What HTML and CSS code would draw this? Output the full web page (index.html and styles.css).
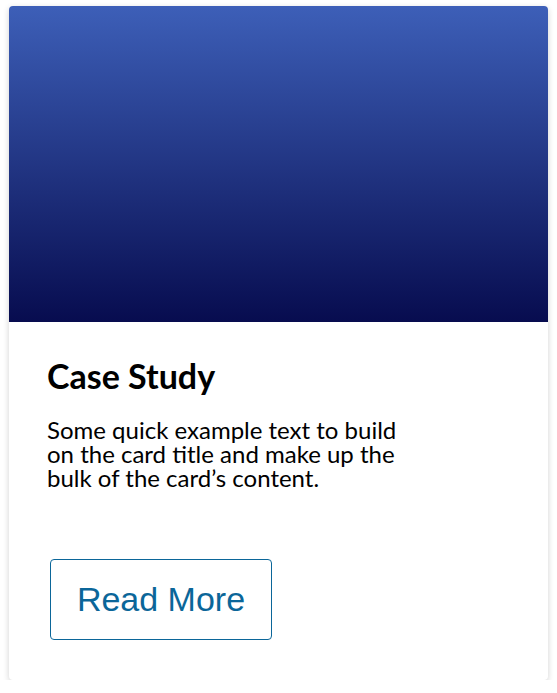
FILE: index.html
```html
<!DOCTYPE html>
<html>
<head>
<meta charset="utf-8">
<link rel="stylesheet" href="styles.css">
</head>
<body>
<div class="card">
  <div class="card-img"></div>
  <div class="card-body">
    <h2 class="card-title">Case Study</h2>
    <p class="card-text">Some quick example text to build on the card title and make up the bulk of the card’s content.</p>
    <a class="btn" href="#">Read More</a>
  </div>
</div>
</body>
</html>
```
FILE: styles.css
```css
html, body { margin: 0; padding: 0; background: #fff; }
body { padding: 6px 9px 0 9px; }
.card {
  width: 539px;
  background: #fff;
  border-radius: 4px;
  box-shadow: 0 2px 6px rgba(0,0,0,0.18);
  overflow: hidden;
}
.card-img {
  height: 316px;
  background: linear-gradient(to bottom, #3d5fb8 0%, #070c4f 100%);
}
.card-body {
  padding: 34px 38px 40px 38px;
}
.card-title {
  margin: 0;
  font-family: Lato, sans-serif;
  font-weight: 700;
  font-size: 34px;
  line-height: 40px;
  color: #000;
}
.card-text {
  margin: 22px 0 0 0;
  max-width: 360px;
  font-family: Lato, sans-serif;
  font-size: 24px;
  line-height: 24px;
  color: #000;
}
.btn {
  display: flex;
  align-items: center;
  justify-content: center;
  margin: 69px 0 0 3px;
  width: 222px;
  height: 81px;
  box-sizing: border-box;
  border: 1px solid #0b6699;
  border-radius: 4px;
  font-family: "Liberation Sans", Arial, sans-serif;
  font-size: 34px;
  color: #0b6699;
  text-decoration: none;
}
```
